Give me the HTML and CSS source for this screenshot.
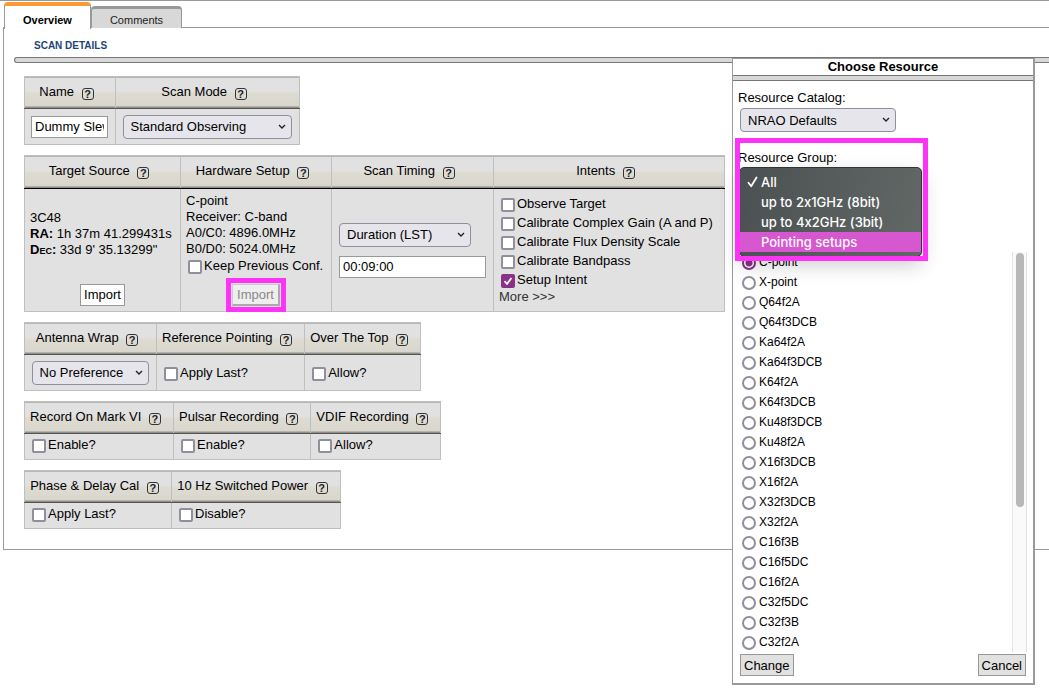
FILE: index.html
```html
<!DOCTYPE html>
<html lang="en">
<head>
  <meta charset="UTF-8">
  <title>Scan Details</title>
  <meta name="viewport" content="width=device-width, initial-scale=1.0">
  <link rel="stylesheet" href="styles.css">
</head>
<body>

  <!-- Tabs -->
  <nav class="tabs">
    <a href="#overview" class="tab active">Overview</a>
    <a href="#comments" class="tab">Comments</a>
  </nav>

  <main class="panel" id="overview">
    <h1>SCAN DETAILS</h1>
    <div class="bar"></div>

    <div class="tables">
      <table>
        <tr>
          <th class="w-name">Name <a href="#" class="help">?</a></th>
          <th class="w-mode">Scan Mode <a href="#" class="help">?</a></th>
        </tr>
        <tr class="tall">
          <td class="mid"><input type="text" class="name" aria-label="Name" value="Dummy Slew"></td>
          <td class="mid">
            <select class="mode" aria-label="Scan Mode"><option>Standard Observing</option></select>
          </td>
        </tr>
      </table>

      <table class="dark">
        <tr>
          <th class="w-source">Target Source <a href="#" class="help">?</a></th>
          <th class="w-hardware">Hardware Setup <a href="#" class="help">?</a></th>
          <th class="w-timing">Scan Timing <a href="#" class="help">?</a></th>
          <th class="w-intents">Intents <a href="#" class="help">?</a></th>
        </tr>
        <tr>
          <td class="bottom">
            <div class="source">
              3C48<br>
              <b>RA:</b> 1h 37m 41.299431s<br>
              <b class="caps">Dec:</b> 33d 9' 35.13299"
            </div>
            <div class="action"><button class="import">Import</button></div>
          </td>
          <td class="bottom">
            <div class="hardware">
              C-point<br>
              Receiver: C-band<br>
              A0/C0: 4896.0MHz<br>
              B0/D0: 5024.0MHz
            </div>
            <label class="check"><input type="checkbox">Keep Previous Conf.</label>
            <div class="action"><span class="mark"><button class="import" disabled>Import</button></span></div>
          </td>
          <td>
            <div class="timing">
              <select class="duration" aria-label="Scan Timing"><option>Duration (LST)</option></select>
              <input type="text" class="time" aria-label="Duration" value="00:09:00">
            </div>
          </td>
          <td>
            <div class="intents">
              <label class="check"><input type="checkbox">Observe Target</label>
              <label class="check"><input type="checkbox">Calibrate Complex Gain (A and P)</label>
              <label class="check"><input type="checkbox">Calibrate Flux Density Scale</label>
              <label class="check"><input type="checkbox">Calibrate Bandpass</label>
              <label class="check"><input type="checkbox" checked>Setup Intent</label>
            </div>
            <a href="#" class="more">More &gt;&gt;&gt;</a>
          </td>
        </tr>
      </table>

      <table>
        <tr>
          <th class="w-wrap">Antenna Wrap <a href="#" class="help">?</a></th>
          <th class="w-pointing">Reference Pointing <a href="#" class="help">?</a></th>
          <th class="w-top">Over The Top <a href="#" class="help">?</a></th>
        </tr>
        <tr class="tall">
          <td class="mid">
            <select class="wrap" aria-label="Antenna Wrap"><option>No Preference</option></select>
          </td>
          <td><label class="check"><input type="checkbox">Apply Last?</label></td>
          <td><label class="check"><input type="checkbox">Allow?</label></td>
        </tr>
      </table>

      <table>
        <tr>
          <th class="w-mark">Record On Mark VI <a href="#" class="help">?</a></th>
          <th class="w-pulsar">Pulsar Recording <a href="#" class="help">?</a></th>
          <th class="w-vdif">VDIF Recording <a href="#" class="help">?</a></th>
        </tr>
        <tr class="short">
          <td><label class="check"><input type="checkbox">Enable?</label></td>
          <td><label class="check"><input type="checkbox">Enable?</label></td>
          <td><label class="check"><input type="checkbox">Allow?</label></td>
        </tr>
      </table>

      <table>
        <tr>
          <th class="w-phase">Phase &amp; Delay Cal <a href="#" class="help">?</a></th>
          <th class="w-power">10 Hz Switched Power <a href="#" class="help">?</a></th>
        </tr>
        <tr class="short">
          <td><label class="check"><input type="checkbox">Apply Last?</label></td>
          <td><label class="check"><input type="checkbox">Disable?</label></td>
        </tr>
      </table>
    </div>
  </main>

  <!-- Resource chooser, floats over the page -->
  <section class="dialog" role="dialog" aria-labelledby="dialogTitle">
    <h2 id="dialogTitle">Choose Resource</h2>
    <div class="dialog-bar"></div>

    <div class="dialog-body">
      <label for="catalog">Resource Catalog:</label>
      <select id="catalog"><option>NRAO Defaults</option></select>

      <div class="group">
        <label for="group">Resource Group:</label>
        <select id="group"><option>All</option></select>
        <ul class="menu" role="listbox" aria-label="Resource Group">
          <li role="option" aria-selected="true">
            <svg class="tick" viewBox="0 0 11 12"><path d="M1.5 6.8 4.2 10.2 9.5 1.5"/></svg>All
          </li>
          <li role="option">up to 2x1GHz (8bit)</li>
          <li role="option">up to 4x2GHz (3bit)</li>
          <li role="option" class="hover">Pointing setups</li>
        </ul>
        <div class="frame"></div>
      </div>

      <div class="resources">
        <div class="list">
          <label><input type="radio" name="resource" checked>C-point</label>
          <label><input type="radio" name="resource">X-point</label>
          <label><input type="radio" name="resource">Q64f2A</label>
          <label><input type="radio" name="resource">Q64f3DCB</label>
          <label><input type="radio" name="resource">Ka64f2A</label>
          <label><input type="radio" name="resource">Ka64f3DCB</label>
          <label><input type="radio" name="resource">K64f2A</label>
          <label><input type="radio" name="resource">K64f3DCB</label>
          <label><input type="radio" name="resource">Ku48f3DCB</label>
          <label><input type="radio" name="resource">Ku48f2A</label>
          <label><input type="radio" name="resource">X16f3DCB</label>
          <label><input type="radio" name="resource">X16f2A</label>
          <label><input type="radio" name="resource">X32f3DCB</label>
          <label><input type="radio" name="resource">X32f2A</label>
          <label><input type="radio" name="resource">C16f3B</label>
          <label><input type="radio" name="resource">C16f5DC</label>
          <label><input type="radio" name="resource">C16f2A</label>
          <label><input type="radio" name="resource">C32f5DC</label>
          <label><input type="radio" name="resource">C32f3B</label>
          <label><input type="radio" name="resource">C32f2A</label>
        </div>
        <div class="track"><div class="thumb"></div></div>
      </div>

      <div class="buttons">
        <button>Change</button>
        <button>Cancel</button>
      </div>
    </div>
  </section>

</body>
</html>
```
FILE: styles.css
```css
* {
  box-sizing: border-box;
}

body {
  font-family: "Liberation Sans", Arial, sans-serif;
  font-size: 13px;
  line-height: 16px;
  margin: 0;
  background: #fff;
  color: #000;
  border-top: 1px solid #999;
  overflow-x: hidden;
}

/* tabs */
.tabs {
  display: flex;
  align-items: flex-end;
  height: 27px;
  padding-left: 4px;
}

.tab {
  height: 22px;
  padding: 3px 18px 0;
  font-size: 11px;
  line-height: 16px;
  color: #222;
  text-decoration: none;
  background: #d8d8d8;
  border: 1px solid #999;
  border-top: 3px solid #999;
  border-bottom: none;
  border-radius: 4px 4px 0 0;
}

.tab.active {
  height: 27px;
  padding-top: 6px;
  margin-bottom: -1px;
  position: relative;
  z-index: 1;
  font-weight: bold;
  color: #000;
  background: #fff;
  border-top: 4px solid #f93;
}

/* main panel */
.panel {
  margin: -1px 0 0 3px;
  padding: 10px 0 20px 10px;
  border: 1px solid #999;
  border-right: none;
}

h1 {
  margin: 0 0 4px 20px;
  font-size: 10px;
  line-height: 15px;
  color: #1d4675;
}

.bar {
  height: 6px;
  background: #d8d8d8;
  border: 1px solid #777;
  border-right: none;
  border-radius: 3px 0 0 3px;
}

.tables {
  display: flex;
  flex-direction: column;
  align-items: flex-start;
  gap: 10px;
  padding: 13px 0 0 10px;
}

table {
  border-collapse: collapse;
  background: #e1e1e1;
}

th,
td {
  border: 1px solid #bfbfbf;
  white-space: nowrap;
}

th {
  height: 32px;
  padding: 0 12px 1px 5px;
  font-weight: normal;
  border-bottom-color: #555;
  background: linear-gradient(#e1e1e1 0, #e1e1e1 45%, #dddbd2 50%, #d8d6cd 92%, #8f8d86 95%);
}

.dark th {
  height: 33px;
  padding-bottom: 3px;
  border-bottom-color: #000;
}

td {
  padding: 0 5px 0 7px;
  vertical-align: middle;
}

.mid {
  padding: 0 7px 0 6px;
  text-align: center;
}

.tall {
  height: 36px;
}

.short {
  height: 26px;
}

.short td {
  padding-bottom: 3px;
}

.w-name { width: 91px; }
.w-mode { width: 184px; }
.w-source { width: 156px; }
.w-hardware { width: 151px; }
.w-timing { width: 162px; }
.w-intents { width: 231px; }
.w-wrap { width: 132px; }
.w-pointing { width: 148px; }
.w-top { width: 116px; }
.w-mark { width: 149px; }
.w-pulsar { width: 137px; }
.w-vdif { width: 130px; }
.w-phase { width: 147px; }
.w-power { width: 169px; }

.help {
  display: inline-block;
  width: 12px;
  height: 12px;
  margin-left: 4px;
  border: 1px solid #333;
  border-radius: 3px;
  font-size: 11px;
  font-weight: bold;
  line-height: 11px;
  text-align: center;
  vertical-align: -2px;
  color: #222;
  text-decoration: none;
}

/* form controls */
input,
select,
button {
  margin: 0;
  font-family: inherit;
  font-size: 13px;
  color: #000;
}

input[type="text"] {
  height: 22px;
  padding: 0 3px;
  background: #fff;
  border: 1px solid #999;
}

select {
  display: inline-block;
  height: 24px;
  padding: 0 20px 0 7px;
  appearance: none;
  border: 1px solid #8f8f9d;
  border-radius: 4px;
  background: #e6e5eb url("data:image/svg+xml,%3Csvg xmlns='http://www.w3.org/2000/svg' width='8' height='6'%3E%3Cpath d='M1 1l3 3 3-3' fill='none' stroke='%23222' stroke-width='1.4'/%3E%3C/svg%3E") no-repeat right 5px center;
  vertical-align: middle;
}

input[type="checkbox"],
input[type="radio"] {
  appearance: none;
  flex: none;
  width: 14px;
  height: 14px;
  background: #fff;
  border: 2px solid #8f8f9d;
}

input[type="checkbox"] {
  border-radius: 2px;
}

input[type="checkbox"]:checked {
  border-color: #8a3189;
  background: #8a3189 url("data:image/svg+xml,%3Csvg xmlns='http://www.w3.org/2000/svg' width='10' height='10'%3E%3Cpath d='M1.5 5.2l2.5 2.6 4.5-5.8' fill='none' stroke='white' stroke-width='1.8'/%3E%3C/svg%3E") no-repeat center;
}

input[type="radio"] {
  border-radius: 50%;
}

input[type="radio"]:checked {
  border-color: #8a3189;
  background: radial-gradient(#8a3189 3px, #fff 4px);
}

.check {
  display: flex;
  align-items: center;
  gap: 2px;
}

.check input {
  margin-top: 2px;
}

button {
  height: 22px;
  padding: 0 3px;
  background: #e1e1e1;
  border: 1px solid #999;
}

.name { width: 77px; }
.mode { width: 169px; }
.wrap { width: 117px; }
.duration { width: 132px; }
.time { width: 147px; }

/* scan details cells */
.bottom {
  padding-left: 5px;
  vertical-align: bottom;
}

.hardware {
  padding-top: 4px;
}

.source {
  padding-bottom: 16px;
}

.caps {
  font-variant: small-caps;
}

.hardware + .check {
  padding: 1px 0 0 2px;
}

.action {
  display: flex;
  justify-content: center;
  align-items: center;
  height: 33px;
  margin-top: 4px;
}

.import {
  background: #fff;
}

.import:disabled {
  padding: 0 4px;
  color: #888;
  background: #eee;
  border: 1px solid #ccc;
  border-right: 2px solid #aaa;
  border-bottom: 2px solid #aaa;
}

.mark {
  display: flex;
  padding: 1px;
  border: 5px solid #ff33f5;
}

.timing {
  display: flex;
  flex-direction: column;
  align-items: flex-start;
  gap: 9px;
}

.intents {
  display: flex;
  flex-direction: column;
  gap: 3px;
}

.more {
  display: block;
  margin: 1px 0 0 -2px;
  color: #333;
  text-decoration: none;
}

/* resource chooser */
.dialog {
  position: absolute;
  top: 58px;
  right: 14px;
  width: 303px;
  background: #fff;
  border: 1px solid #999;
  border-right-width: 2px;
  border-bottom-width: 2px;
}

h2 {
  margin: 0;
  font-size: 13px;
  line-height: 16px;
  text-align: center;
}

.dialog-bar {
  height: 6px;
  background: #d8d8d8;
  border: 1px solid #777;
  border-left: none;
  border-right: none;
}

.dialog-body {
  padding: 9px 6px 7px 5px;
}

.dialog-body > label,
.group > label {
  display: block;
}

.dialog-body select {
  display: block;
  width: 156px;
  margin: 2px 0 0 2px;
}

.group {
  position: relative;
  padding-top: 18px;
}

.menu {
  position: absolute;
  top: 35px;
  left: 1px;
  width: 183px;
  margin: 0;
  padding: 4px 0;
  list-style: none;
  font-family: Inter, sans-serif;
  font-size: 13px;
  font-weight: 500;
  font-feature-settings: "calt" 0;
  line-height: 20px;
  color: #fff;
  background: linear-gradient(100deg, #4b5052, #626866);
  border: 1px solid #333;
  border-radius: 5px;
  box-shadow: 0 8px 20px rgba(0, 0, 0, 0.2);
}

.menu li {
  position: relative;
  padding-left: 21px;
}

.menu .hover {
  background: #d657d0;
}

.tick {
  position: absolute;
  left: 7px;
  top: 4px;
  width: 11px;
  height: 12px;
  fill: none;
  stroke: #fff;
  stroke-width: 1.8;
  stroke-linecap: round;
  stroke-linejoin: round;
}

.frame {
  position: absolute;
  top: 6px;
  left: -3px;
  width: 193px;
  height: 123px;
  border: 5px solid #ff33f5;
  pointer-events: none;
}

.resources {
  display: flex;
  margin-top: 60px;
  font-size: 12px;
}

.list {
  flex: 1;
}

.list label {
  display: flex;
  align-items: center;
  gap: 3px;
  height: 20px;
  padding-left: 4px;
}

.list input {
  margin-top: 2px;
}

.track {
  width: 15px;
  background: #fafafa;
  border: 1px solid #e4e4e4;
  border-top: none;
  border-bottom: none;
  padding: 1px 3px;
}

.thumb {
  width: 8px;
  height: 254px;
  background: #b8b8b8;
  border-radius: 4px;
}

.buttons {
  display: flex;
  justify-content: space-between;
  padding: 2px 1px 0 2px;
}
```
